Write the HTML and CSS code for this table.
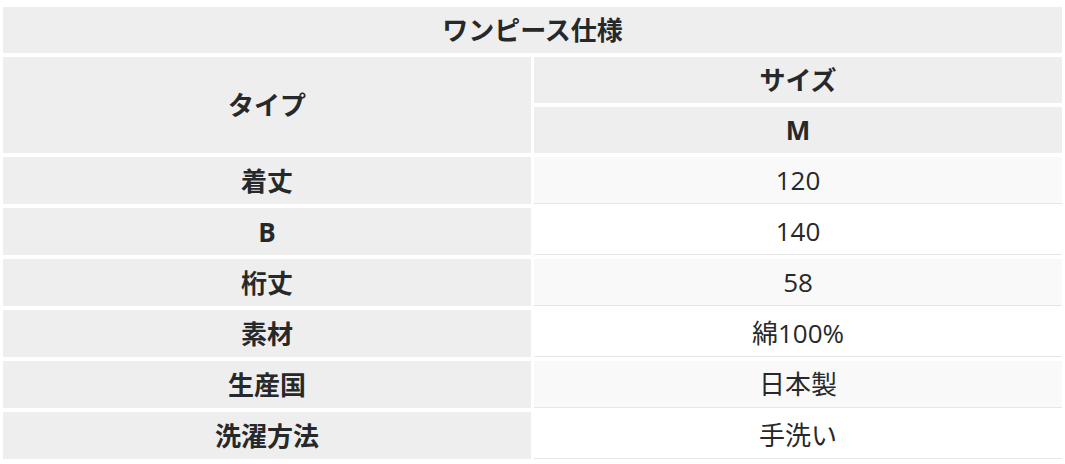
FILE: index.html
```html
<!DOCTYPE html>
<html lang="ja">
<head>
<meta charset="utf-8">
<title>ワンピース仕様</title>
<link rel="stylesheet" href="styles.css">
</head>
<body>
<table class="spec">
  <thead>
    <tr><th class="hd" colspan="2">ワンピース仕様</th></tr>
    <tr><th class="hd" rowspan="2">タイプ</th><th class="hd">サイズ</th></tr>
    <tr><th class="hd">M</th></tr>
  </thead>
  <tbody>
    <tr><th class="label">着丈</th><td class="val">120</td></tr>
    <tr><th class="label">B</th><td class="val">140</td></tr>
    <tr><th class="label">桁丈</th><td class="val">58</td></tr>
    <tr><th class="label">素材</th><td class="val">綿100%</td></tr>
    <tr><th class="label">生産国</th><td class="val">日本製</td></tr>
    <tr><th class="label">洗濯方法</th><td class="val">手洗い</td></tr>
  </tbody>
</table>
</body>
</html>
```

FILE: styles.css
```css
html, body {
  margin: 0;
  padding: 0;
  background: #ffffff;
}

body {
  font-family: "Open Sans", "Noto Sans CJK JP", sans-serif;
  font-size: 26px;
  color: #26282a;
}

.spec {
  width: 100%;
  margin-top: 3px;
  border-collapse: separate;
  border-spacing: 3px 4px;
  table-layout: fixed;
}

.spec th,
.spec td {
  text-align: center;
  vertical-align: middle;
  line-height: 30px;
  padding: 8px 0;
}

.hd {
  background: #eeeeee;
  font-weight: bold;
  height: 30px;
}

.label {
  background: #eeeeee;
  font-weight: bold;
  height: 31px;
  padding-bottom: 8px;
}

.val {
  font-weight: normal;
  border-bottom: 1px solid #e6e6e6;
  height: 30px;
}

.spec tbody tr:nth-child(odd) .val {
  background: #f9f9f9;
}

.spec tbody tr:nth-child(even) .val {
  background: #ffffff;
}
```
